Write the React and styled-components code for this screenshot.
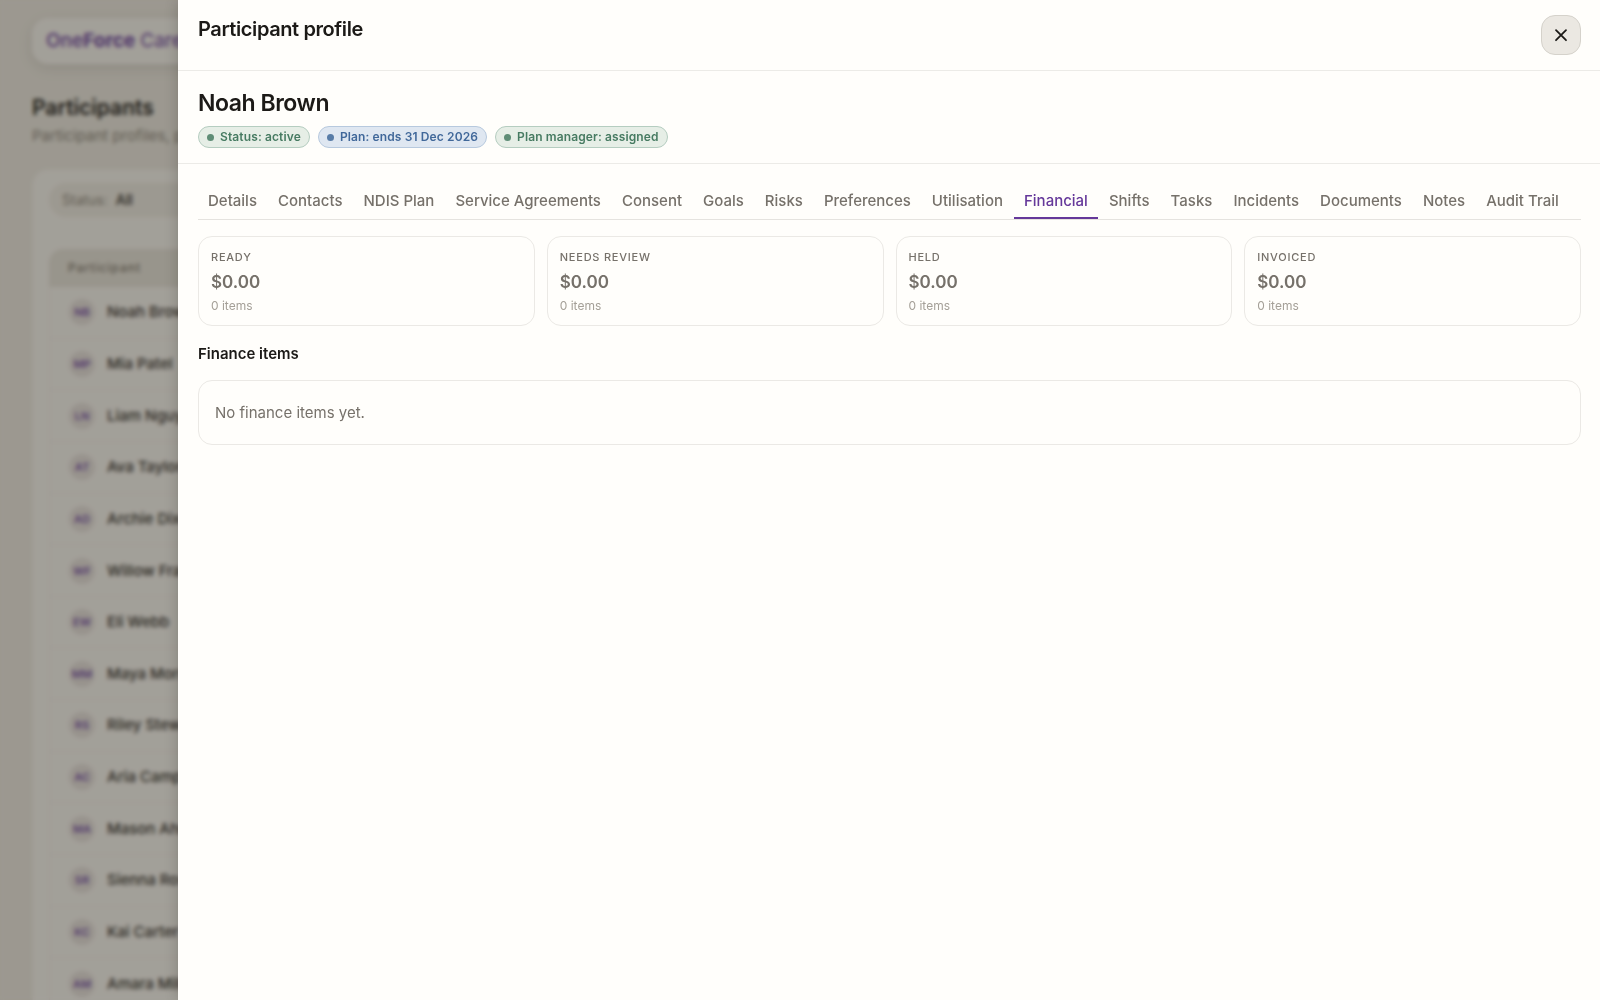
import React, { useState } from "react";
import styled, { createGlobalStyle, css } from "styled-components";

const GlobalStyle = createGlobalStyle`
  *, *::before, *::after { box-sizing: border-box; }
  html, body, #root { height: 100%; }
  body {
    margin: 0;
    overflow: hidden;
    background: #f0ece3;
    color: #1c1a17;
    font-family: Inter, "Noto Sans", sans-serif;
    font-size: 15px;
    line-height: 24px;
    -webkit-font-smoothing: antialiased;
  }
  h1, h2, h3, p, dl, dd { margin: 0; }
  button { font: inherit; color: inherit; cursor: pointer; }
`;

/* Page behind the drawer */

const Page = styled.div`
  display: flex;
  flex-direction: column;
  height: 100%;
  padding: 18px 32px 0;
  overflow: hidden;
`;

const TopBar = styled.header`
  display: flex;
  align-items: center;
  flex: none;
  height: 46px;
  padding: 0 14px;
  border-radius: 16px;
  background: #fbf8f2;
  box-shadow: 0 4px 14px rgba(60, 50, 40, 0.12);
`;

const Brand = styled.a`
  color: #6b3fa0;
  font-size: 19px;
  font-weight: 500;
  text-decoration: none;

  strong { font-weight: 700; }
  span { font-weight: 400; }
`;

const PageHeading = styled.div`
  flex: none;
  padding: 29px 0 20px;

  h1 {
    font-size: 21px;
    line-height: 30px;
    font-weight: 600;
  }

  p {
    color: #8c857a;
    line-height: 26px;
  }
`;

const Panel = styled.section`
  flex: none;
  padding: 13px 16px;
  border: 1px solid #f4f0e8;
  border-radius: 16px;
  background: #fbf8f2;
`;

const Filter = styled.button`
  display: flex;
  align-items: center;
  gap: 8px;
  width: 200px;
  height: 34px;
  margin-bottom: 32px;
  padding: 0 13px;
  border: 0;
  border-radius: 17px;
  background: #f1ede4;
  color: #8c857a;
  font-size: 14px;

  strong {
    color: #2b2824;
    font-weight: 500;
  }
`;

const PeopleTable = styled.table`
  width: 100%;
  height: 761px;
  border-spacing: 0;

  th {
    height: 38px;
    padding: 0 19px;
    border-radius: 14px 14px 0 0;
    background: #eae6dc;
    color: #7d766b;
    font-size: 12px;
    letter-spacing: 1px;
    font-weight: 500;
    text-align: left;
  }

  td {
    padding: 0 19px;
    border: 1px solid #f3efe8;
    border-top: 0;
  }
`;

const Person = styled.div`
  display: flex;
  align-items: center;
  gap: 12px;
  color: #33302b;
  font-size: 15px;
  font-weight: 500;
`;

const Avatar = styled.span`
  display: grid;
  place-items: center;
  width: 26px;
  height: 26px;
  border-radius: 50%;
  background: #e9e3de;
  color: #7a54a8;
  font-size: 11px;
  font-weight: 600;
`;

const Backdrop = styled.div`
  position: fixed;
  inset: 0;
  background: rgba(30, 27, 20, 0.4);
  backdrop-filter: blur(2px);
`;

/* Drawer */

const Drawer = styled.aside`
  position: fixed;
  inset: 0 0 0 178px;
  display: flex;
  flex-direction: column;
  overflow-y: auto;
  background: #fffefb;
  box-shadow: -1px 0 12px rgba(30, 27, 20, 0.2);
`;

const DrawerHeader = styled.header`
  display: flex;
  align-items: flex-start;
  justify-content: space-between;
  padding: 15px 19px 15px 20px;
  border-bottom: 1px solid #ecebe7;

  h2 {
    font-size: 20px;
    line-height: 28px;
    font-weight: 600;
    letter-spacing: -0.02em;
  }
`;

const CloseButton = styled.button`
  display: grid;
  place-items: center;
  width: 40px;
  height: 40px;
  padding: 0;
  border: 1px solid #d5d2cb;
  border-radius: 14px;
  background: #ebe8e2;
`;

const Identity = styled.div`
  display: flex;
  flex-direction: column;
  gap: 7px;
  padding: 16px 20px 15px;
  border-bottom: 1px solid #ecebe7;

  h3 {
    font-size: 23px;
    line-height: 32px;
    font-weight: 600;
    letter-spacing: -0.02em;
  }
`;

const Pills = styled.div`
  display: flex;
  flex-wrap: wrap;
  gap: 8px;
`;

const tones = {
  green: css`
    border-color: #b5cdc0;
    background: #e6eee6;
    color: #477b62;
  `,
  blue: css`
    border-color: #b7c9de;
    background: #dfe7f1;
    color: #41689a;
  `,
};

const Pill = styled.span`
  display: inline-flex;
  align-items: center;
  gap: 6px;
  height: 22px;
  padding: 0 8px;
  border: 1px solid;
  border-radius: 11px;
  font-size: 12px;
  font-weight: 600;
  letter-spacing: 0.01em;
  ${({ $tone }) => tones[$tone]}

  &::before {
    content: "";
    width: 7px;
    height: 7px;
    border-radius: 50%;
    background: currentColor;
    opacity: 0.85;
  }
`;

const DrawerBody = styled.div`
  display: flex;
  flex-direction: column;
  padding: 16px 19px 24px 20px;
`;

const TabList = styled.div`
  display: flex;
  gap: 1px;
  margin-bottom: 16px;
  border-bottom: 1px solid #e5e3df;
`;

const Tab = styled.button`
  height: 39px;
  padding: 4px 10px 0;
  border: 0;
  border-bottom: 2px solid ${({ $active }) => ($active ? "#65389a" : "transparent")};
  background: none;
  color: ${({ $active }) => ($active ? "#65389a" : "#76716a")};
  font-size: 15px;
  font-weight: 500;
  white-space: nowrap;
`;

const Summary = styled.dl`
  display: grid;
  grid-template-columns: repeat(4, 1fr);
  gap: 12px;
`;

const SummaryCard = styled.div`
  display: flex;
  flex-direction: column;
  gap: 4px;
  padding: 11px 12px;
  border: 1px solid #ebe9e5;
  border-radius: 14px;

  dt {
    color: #76716a;
    font-size: 11px;
    line-height: 18px;
    font-weight: 500;
    letter-spacing: 0.07em;
    text-transform: uppercase;
  }
`;

const Amount = styled.dd`
  color: #76716a;
  font-size: 17px;
  line-height: 24px;
  font-weight: 600;
`;

const Count = styled.dd`
  color: #a5a098;
  font-size: 12px;
  line-height: 16px;
`;

const SectionTitle = styled.h3`
  margin: 16px 0 14px;
  font-size: 15px;
  line-height: 24px;
  font-weight: 600;
`;

const Empty = styled.p`
  padding: 20px 16px 19px;
  border: 1px solid #ebe9e5;
  border-radius: 14px;
  color: #76716a;
`;

const people = [
  "Noah Brown",
  "Mia Patel",
  "Liam Nguyen",
  "Ava Taylor",
  "Archie Dixon",
  "Willow Fraser",
  "Eli Webb",
  "Maya Morris",
  "Riley Stewart",
  "Aria Campbell",
  "Mason Ahmed",
  "Sienna Ross",
  "Kai Carter",
  "Amara Mills",
];

const tabs = [
  "Details",
  "Contacts",
  "NDIS Plan",
  "Service Agreements",
  "Consent",
  "Goals",
  "Risks",
  "Preferences",
  "Utilisation",
  "Financial",
  "Shifts",
  "Tasks",
  "Incidents",
  "Documents",
  "Notes",
  "Audit Trail",
];

const totals = ["Ready", "Needs review", "Held", "Invoiced"];

const initials = (name) =>
  name
    .split(" ")
    .map((word) => word[0])
    .join("");

export default function App() {
  const [active, setActive] = useState("Financial");

  return (
    <>
      <GlobalStyle />
      <Page>
        <TopBar>
          <Brand href="#home">
            One<strong>Force</strong> <span>Care</span>
          </Brand>
        </TopBar>
        <PageHeading>
          <h1>Participants</h1>
          <p>Participant profiles, plans</p>
        </PageHeading>
        <Panel>
          <Filter type="button">
            Status: <strong>All</strong>
          </Filter>
          <PeopleTable>
            <thead>
              <tr>
                <th scope="col">Participant</th>
              </tr>
            </thead>
            <tbody>
              {people.map((name) => (
                <tr key={name}>
                  <td>
                    <Person>
                      <Avatar>{initials(name)}</Avatar>
                      {name}
                    </Person>
                  </td>
                </tr>
              ))}
            </tbody>
          </PeopleTable>
        </Panel>
      </Page>
      <Backdrop />
      <Drawer role="dialog" aria-label="Participant profile">
        <DrawerHeader>
          <h2>Participant profile</h2>
          <CloseButton type="button" aria-label="Close">
            <svg width="14" height="14" viewBox="0 0 14 14" fill="none" aria-hidden="true">
              <path d="M2 2.2 12 12.2M12 2.2 2 12.2" stroke="#1c1a17" strokeWidth="1.8" strokeLinecap="round" />
            </svg>
          </CloseButton>
        </DrawerHeader>
        <Identity>
          <h3>Noah Brown</h3>
          <Pills>
            <Pill $tone="green">Status: active</Pill>
            <Pill $tone="blue">Plan: ends 31 Dec 2026</Pill>
            <Pill $tone="green">Plan manager: assigned</Pill>
          </Pills>
        </Identity>
        <DrawerBody>
          <TabList role="tablist">
            {tabs.map((tab) => (
              <Tab
                key={tab}
                type="button"
                role="tab"
                aria-selected={tab === active}
                $active={tab === active}
                onClick={() => setActive(tab)}
              >
                {tab}
              </Tab>
            ))}
          </TabList>
          <Summary>
            {totals.map((label) => (
              <SummaryCard key={label}>
                <dt>{label}</dt>
                <Amount>$0.00</Amount>
                <Count>0 items</Count>
              </SummaryCard>
            ))}
          </Summary>
          <SectionTitle>Finance items</SectionTitle>
          <Empty>No finance items yet.</Empty>
        </DrawerBody>
      </Drawer>
    </>
  );
}
